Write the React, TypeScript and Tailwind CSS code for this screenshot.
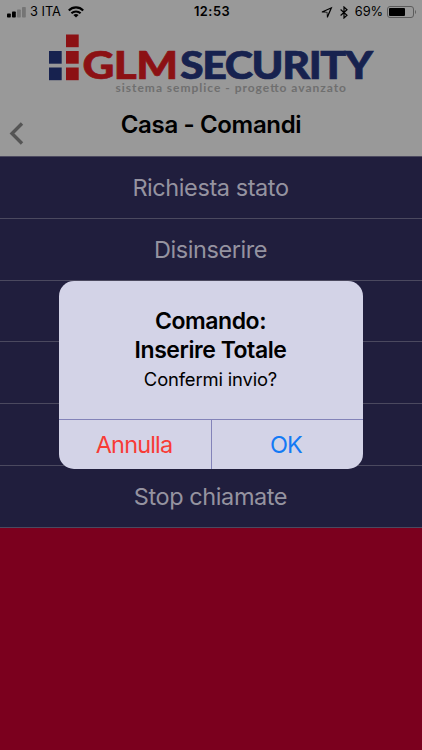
// rows without a label sit behind the dialog
const commands = ['Richiesta stato', 'Disinserire', '', '', '', 'Stop chiamate'];

function SignalBars() {
  return (
    <svg className="ml-[7px] h-3 w-[19px]" viewBox="0 0 19 12">
      <rect x="0" y="7.5" width="3.8" height="4" rx="0.8" fill="#000" />
      <rect x="5" y="5.5" width="3.8" height="6" rx="0.8" fill="#000" />
      <rect x="10" y="3.5" width="3.8" height="8" rx="0.8" fill="#757575" />
      <rect x="15" y="1" width="3.8" height="10.5" rx="0.8" fill="#757575" />
    </svg>
  );
}

function WifiIcon() {
  return (
    <svg className="ml-[7px] h-3 w-4" viewBox="0 0 16 12" fill="none" stroke="#000" strokeWidth="2.1">
      <path d="M0.8 4.4C4.8 0.3 11.2 0.3 15.2 4.4" />
      <path d="M3.4 7.3C6 4.8 10 4.8 12.6 7.3" />
      <path d="M8 11.6L5.4 9C7 7.7 9 7.7 10.6 9Z" fill="#000" stroke="none" />
    </svg>
  );
}

function StatusBar() {
  return (
    <div className="grid h-6 grid-cols-[1fr_auto_1fr] items-center text-[12.8px] text-black">
      <div className="flex items-center">
        <SignalBars />
        <span className="ml-[4px]">3 ITA</span>
        <WifiIcon />
      </div>
      <span className="ml-[2px] font-semibold tracking-[0.5px]">12:53</span>
      <div className="flex items-center justify-end">
        <svg className="h-3 w-3" viewBox="0 0 12 12" fill="#000">
          <path fillRule="evenodd" d="M11.5 0.8L0.8 5.4V6.4L5.7 6.6L5.9 11.5H6.9ZM9.2 2.9L6.5 9L6.4 5.9L3.5 5.5Z" />
        </svg>
        <svg className="ml-[7px] h-[13px] w-2" viewBox="0 0 8 13" fill="none" stroke="#000" strokeWidth="1.2">
          <path d="M0.6 3.5L7 9.2L4 12V1L7 3.8L0.6 9.5" />
        </svg>
        <span className="ml-[7px] tracking-[-0.1px]">69%</span>
        <svg className="mr-[5px] ml-[4px] h-3 w-[30px]" viewBox="0 0 30 12">
          <rect x="0.5" y="0.5" width="26" height="11" rx="2.5" fill="none" stroke="#5c5c5c" />
          <rect x="2" y="2" width="16" height="8" rx="1" fill="#000" />
          <path d="M28 4V8C29.3 7.5 29.3 4.5 28 4Z" fill="#5c5c5c" />
        </svg>
      </div>
    </div>
  );
}

function Logo() {
  return (
    <svg className="mx-auto block h-[66px] w-[330px]" viewBox="46 30 330 66" role="img" aria-label="GLM Security">
      <g fill="#8c1114">
        <rect x="66" y="34.5" width="12.7" height="12.7" />
        <rect x="66" y="51" width="12.7" height="12.7" />
        <rect x="66" y="67.5" width="12.7" height="12.7" />
      </g>
      <g fill="#17224f">
        <rect x="49" y="51" width="12.7" height="12.7" />
        <rect x="49" y="67.5" width="12.7" height="12.7" />
      </g>
      <g className="font-['Lato',sans-serif] font-black" fontSize="38.5" strokeWidth="0.7">
        <text
          x="82.5"
          y="79.4"
          textLength="95"
          lengthAdjust="spacingAndGlyphs"
          letterSpacing="-0.5"
          fill="#8c1114"
          stroke="#8c1114"
        >
          GLM
        </text>
        <text
          x="180"
          y="79.4"
          textLength="191.5"
          lengthAdjust="spacingAndGlyphs"
          letterSpacing="-1.3"
          fill="#17224f"
          stroke="#17224f"
        >
          SECURITY
        </text>
      </g>
      <text
        x="115.5"
        y="92"
        textLength="230.5"
        className="font-['Lato',sans-serif] font-bold"
        fontSize="12"
        fill="#6f6f6f"
      >
        sistema semplice - progetto avanzato
      </text>
    </svg>
  );
}

function ConfirmDialog() {
  return (
    <div
      role="alertdialog"
      className="absolute top-[281px] left-[59px] flex h-[188px] w-[304px] flex-col overflow-hidden rounded-[15px] bg-[#d3d3e7] text-center text-black"
    >
      <div className="h-[138px] pt-[26px] pr-px">
        <h2 className="text-[23px] leading-[29px] font-semibold tracking-[-0.45px]">
          Comando:
          <br />
          Inserire Totale
        </h2>
        <p className="text-[18.4px] leading-[28px] tracking-[-0.15px]">Confermi invio?</p>
      </div>
      <div className="grid flex-1 grid-cols-[153px_1fr] border-t border-[#8383b9] text-[23.5px]">
        <button className="border-r border-[#8383b9] pt-px pr-[2px] tracking-[-0.85px] text-[#f83b36]">Annulla</button>
        <button className="pt-px pr-[3px] tracking-[-1px] text-[#147af5]">OK</button>
      </div>
    </div>
  );
}

export default function App() {
  return (
    <div className="relative h-[750px] w-[422px] overflow-hidden bg-[#7b001e] font-['Inter',sans-serif]">
      <header className="h-[156px] bg-[#999]">
        <StatusBar />
        <div className="pt-[6px]">
          <Logo />
        </div>
        <div className="relative h-[60px]">
          <svg className="absolute top-[26px] left-[9px] h-[23px] w-[15px]" viewBox="0 0 15 23" fill="none" stroke="#555" strokeWidth="3.4">
            <path d="M13 1.5L3 11.5L13 21.5" />
          </svg>
          <h1 className="pt-[14px] text-center text-[24px] leading-[30px] font-semibold tracking-[-0.35px] text-black">
            Casa - Comandi
          </h1>
        </div>
      </header>
      <ul className="grid h-[372px] grid-rows-6 border-t border-[#4b495f] bg-[#201e3d]">
        {commands.map((label, i) => (
          <li
            key={i}
            className="flex items-center justify-center border-b border-[#4b495f] pr-px text-[23.5px] tracking-[-0.42px] text-[#9593a0]"
          >
            {label}
          </li>
        ))}
      </ul>
      <ConfirmDialog />
    </div>
  );
}
